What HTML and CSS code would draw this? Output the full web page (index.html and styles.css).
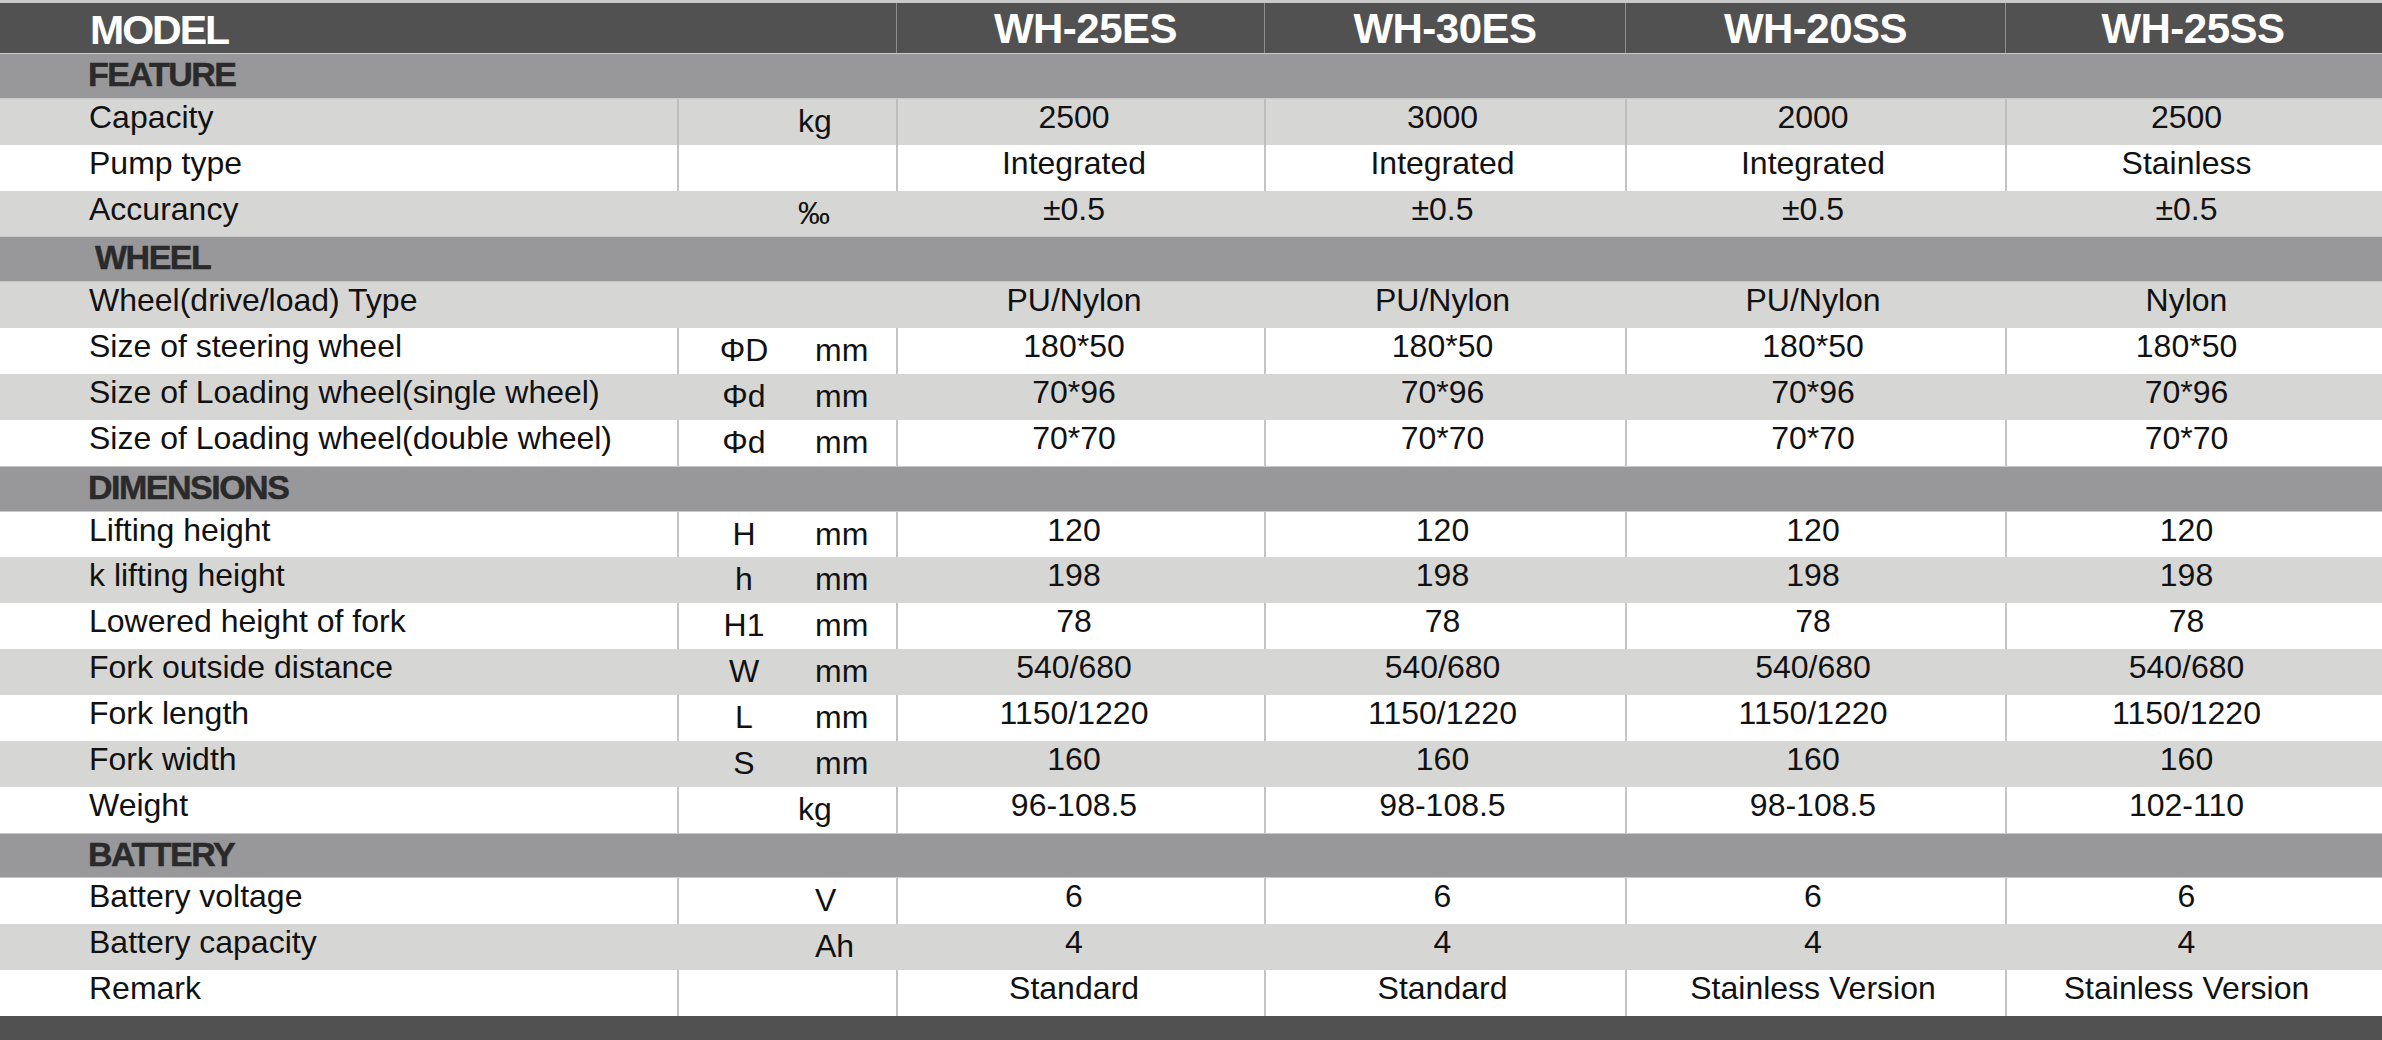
FILE: index.html
```html
<!DOCTYPE html>
<html lang="en">
<head>
<meta charset="utf-8">
<title>Weighing pallet truck specifications</title>
<link rel="stylesheet" href="styles.css">
</head>
<body>
<div class="sheet">
  <div class="head">
    <div class="model">MODEL</div>
    <div class="name c1">WH-25ES</div>
    <div class="name">WH-30ES</div>
    <div class="name">WH-20SS</div>
    <div class="name c4">WH-25SS</div>
  </div>

  <div class="sec">FEATURE</div>
  <div class="row g lined">
    <div class="label">Capacity</div>
    <div class="cell unit"><span class="sym"></span><span class="u k">kg</span></div>
    <div class="cell val c1">2500</div><div class="cell val c2">3000</div><div class="cell val c3">2000</div><div class="cell val c4">2500</div>
  </div>
  <div class="row">
    <div class="label">Pump type</div>
    <div class="cell unit"><span class="sym"></span><span class="u"></span></div>
    <div class="cell val c1">Integrated</div><div class="cell val c2">Integrated</div><div class="cell val c3">Integrated</div><div class="cell val c4">Stainless</div>
  </div>
  <div class="row g">
    <div class="label">Accurancy</div>
    <div class="cell unit"><span class="sym"></span><span class="u pm">‰</span></div>
    <div class="cell val c1">±0.5</div><div class="cell val c2">±0.5</div><div class="cell val c3">±0.5</div><div class="cell val c4">±0.5</div>
  </div>

  <div class="sec wheel">WHEEL</div>
  <div class="row g">
    <div class="label">Wheel(drive/load) Type</div>
    <div class="cell unit"><span class="sym"></span><span class="u"></span></div>
    <div class="cell val c1">PU/Nylon</div><div class="cell val c2">PU/Nylon</div><div class="cell val c3">PU/Nylon</div><div class="cell val c4">Nylon</div>
  </div>
  <div class="row">
    <div class="label">Size of steering wheel</div>
    <div class="cell unit"><span class="sym">ΦD</span><span class="u">mm</span></div>
    <div class="cell val c1">180*50</div><div class="cell val c2">180*50</div><div class="cell val c3">180*50</div><div class="cell val c4">180*50</div>
  </div>
  <div class="row g">
    <div class="label">Size of Loading wheel(single wheel)</div>
    <div class="cell unit"><span class="sym">Φd</span><span class="u">mm</span></div>
    <div class="cell val c1">70*96</div><div class="cell val c2">70*96</div><div class="cell val c3">70*96</div><div class="cell val c4">70*96</div>
  </div>
  <div class="row">
    <div class="label">Size of Loading wheel(double wheel)</div>
    <div class="cell unit"><span class="sym">Φd</span><span class="u">mm</span></div>
    <div class="cell val c1">70*70</div><div class="cell val c2">70*70</div><div class="cell val c3">70*70</div><div class="cell val c4">70*70</div>
  </div>

  <div class="sec">DIMENSIONS</div>
  <div class="row">
    <div class="label">Lifting height</div>
    <div class="cell unit"><span class="sym">H</span><span class="u">mm</span></div>
    <div class="cell val c1">120</div><div class="cell val c2">120</div><div class="cell val c3">120</div><div class="cell val c4">120</div>
  </div>
  <div class="row g">
    <div class="label">k lifting height</div>
    <div class="cell unit"><span class="sym">h</span><span class="u">mm</span></div>
    <div class="cell val c1">198</div><div class="cell val c2">198</div><div class="cell val c3">198</div><div class="cell val c4">198</div>
  </div>
  <div class="row">
    <div class="label">Lowered height of fork</div>
    <div class="cell unit"><span class="sym">H1</span><span class="u">mm</span></div>
    <div class="cell val c1">78</div><div class="cell val c2">78</div><div class="cell val c3">78</div><div class="cell val c4">78</div>
  </div>
  <div class="row g">
    <div class="label">Fork outside distance</div>
    <div class="cell unit"><span class="sym">W</span><span class="u">mm</span></div>
    <div class="cell val c1">540/680</div><div class="cell val c2">540/680</div><div class="cell val c3">540/680</div><div class="cell val c4">540/680</div>
  </div>
  <div class="row">
    <div class="label">Fork length</div>
    <div class="cell unit"><span class="sym">L</span><span class="u">mm</span></div>
    <div class="cell val c1">1150/1220</div><div class="cell val c2">1150/1220</div><div class="cell val c3">1150/1220</div><div class="cell val c4">1150/1220</div>
  </div>
  <div class="row g">
    <div class="label">Fork width</div>
    <div class="cell unit"><span class="sym">S</span><span class="u">mm</span></div>
    <div class="cell val c1">160</div><div class="cell val c2">160</div><div class="cell val c3">160</div><div class="cell val c4">160</div>
  </div>
  <div class="row">
    <div class="label">Weight</div>
    <div class="cell unit"><span class="sym"></span><span class="u k">kg</span></div>
    <div class="cell val c1">96-108.5</div><div class="cell val c2">98-108.5</div><div class="cell val c3">98-108.5</div><div class="cell val c4">102-110</div>
  </div>

  <div class="sec">BATTERY</div>
  <div class="row">
    <div class="label">Battery voltage</div>
    <div class="cell unit"><span class="sym"></span><span class="u">V</span></div>
    <div class="cell val c1">6</div><div class="cell val c2">6</div><div class="cell val c3">6</div><div class="cell val c4">6</div>
  </div>
  <div class="row g">
    <div class="label">Battery capacity</div>
    <div class="cell unit"><span class="sym"></span><span class="u">Ah</span></div>
    <div class="cell val c1">4</div><div class="cell val c2">4</div><div class="cell val c3">4</div><div class="cell val c4">4</div>
  </div>
  <div class="row">
    <div class="label">Remark</div>
    <div class="cell unit"><span class="sym"></span><span class="u"></span></div>
    <div class="cell val c1">Standard</div><div class="cell val c2">Standard</div><div class="cell val c3">Stainless Version</div><div class="cell val c4">Stainless Version</div>
  </div>

  <div class="foot"></div>
</div>
</body>
</html>
```

FILE: styles.css
```css
html, body {
  margin: 0;
  padding: 0;
  background: #ffffff;
}

.sheet {
  width: 2382px;
  height: 1040px;
  box-sizing: border-box;
  border-top: 3px solid #c9c9c9;
  display: flex;
  flex-direction: column;
  font-family: "Liberation Sans", Arial, sans-serif;
  overflow: hidden;
}

/* header */
.head {
  flex: 0 0 50px;
  height: 50px;
  background: #515151;
  color: #ffffff;
  font-weight: bold;
  display: grid;
  grid-template-columns: 896px 368px 361px 380px 377px;
  overflow: hidden;
}

.model {
  padding-left: 90px;
  font-size: 41px;
  line-height: 54px;
  letter-spacing: -2px;
}

.name {
  border-left: 1px solid #8e8e8e;
  text-align: center;
  font-size: 42px;
  line-height: 52px;
  letter-spacing: -0.5px;
}

.name.c1 {
  padding-left: 10px;
}

.name.c4 {
  padding-right: 2px;
}

/* section bands */
.sec {
  flex: 0 0 45.86px;
  height: 45.86px;
  box-sizing: border-box;
  background: #98989a;
  color: #2a2a2a;
  font-weight: bold;
  font-size: 34px;
  letter-spacing: -1.5px;
  line-height: 43px;
  padding-left: 88px;
  -webkit-text-stroke: 0.5px #2a2a2a;
  box-shadow: inset 0 1px 0 #c8c8c8, inset 0 -1px 0 #c8c8c8;
}

.sec.wheel {
  padding-left: 95px;
}

/* data rows */
.row {
  flex: 0 0 45.86px;
  height: 45.86px;
  display: grid;
  grid-template-columns: 677px 219px 368px 361px 380px 377px;
  background: #ffffff;
  color: #111111;
  font-size: 32px;
  line-height: 37px;
  white-space: nowrap;
}

.row.g {
  background: #d6d6d4;
}

.label {
  padding-left: 89px;
}

.cell {
  box-sizing: border-box;
  border-left: 2px solid #c4c4c4;
}

.row.g .cell {
  border-left-color: transparent;
}

.row.g.lined .cell {
  border-left-color: #bdbdbd;
}

.unit {
  display: grid;
  grid-template-columns: 130px 87px;
  padding-top: 4px;
}

.sym {
  text-align: center;
}

.u {
  padding-left: 6px;
}

.u.k {
  margin-left: -17px;
}

.u.pm {
  margin-left: -17px;
}

.val {
  text-align: center;
}

.val.c1 {
  padding-right: 14px;
}

.val.c2,
.val.c3 {
  padding-right: 6px;
}

.val.c4 {
  padding-right: 16px;
}

/* bottom bar */
.foot {
  flex: 1 1 auto;
  background: #515151;
}
```
